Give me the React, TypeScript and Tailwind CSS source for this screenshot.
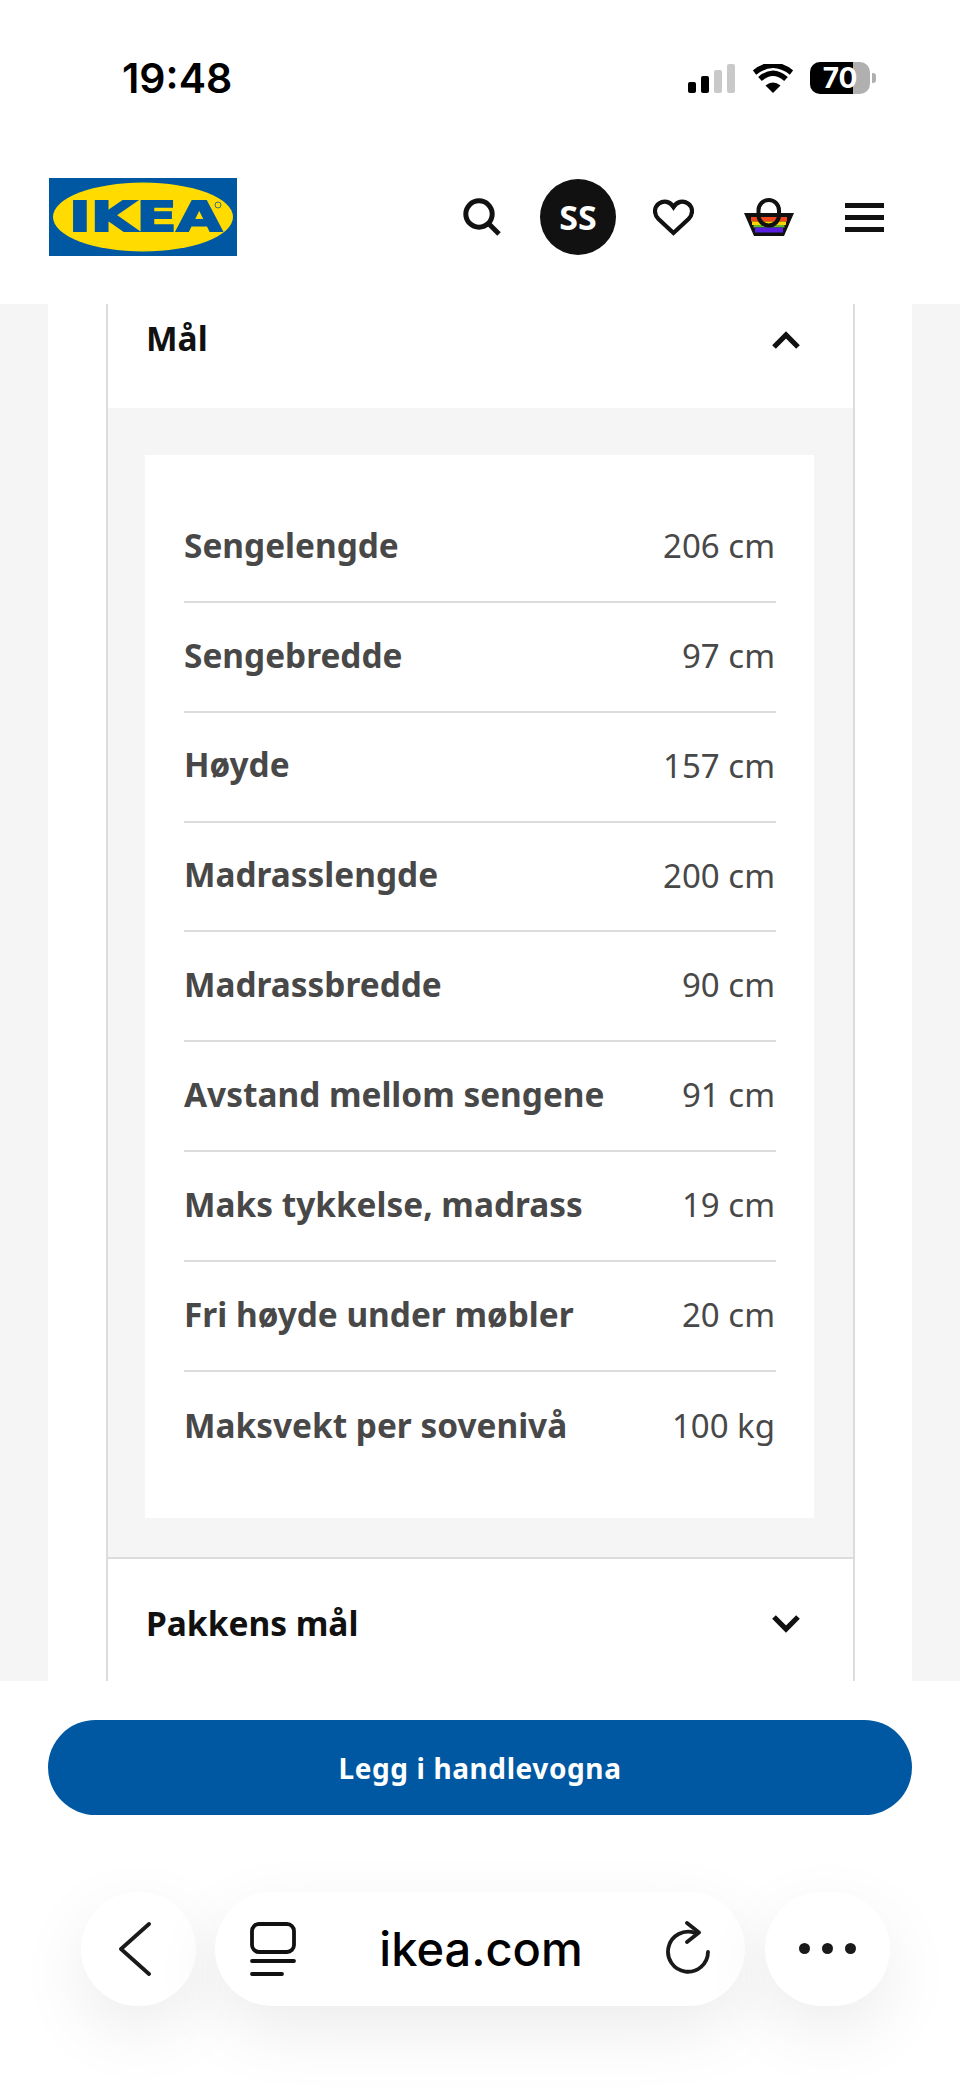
import React from "react";

const noto = "font-['Noto_Sans',sans-serif]";

const rows: [string, string][] = [
  ["Sengelengde", "206 cm"],
  ["Sengebredde", "97 cm"],
  ["Høyde", "157 cm"],
  ["Madrasslengde", "200 cm"],
  ["Madrassbredde", "90 cm"],
  ["Avstand mellom sengene", "91 cm"],
  ["Maks tykkelse, madrass", "19 cm"],
  ["Fri høyde under møbler", "20 cm"],
  ["Maksvekt per sovenivå", "100 kg"],
];

function Cell() {
  return (
    <div className="flex items-end gap-[5px] h-[29px]">
      <div className="w-[8px] h-[11px] rounded-[2px] bg-black" />
      <div className="w-[8px] h-[17px] rounded-[2px] bg-black" />
      <div className="w-[8px] h-[23px] rounded-[2px] bg-[#c9c9c9]" />
      <div className="w-[8px] h-[29px] rounded-[2px] bg-[#c9c9c9]" />
    </div>
  );
}

function Wifi() {
  return (
    <svg width="40" height="29" viewBox="0 0 40 29">
      <path d="M20 29 L12.5 21.5 Q20 15.5 27.5 21.5 Z" fill="#000" />
      <path d="M7 15 Q20 3.5 33 15" stroke="#000" strokeWidth="5.5" fill="none" />
      <path d="M1.5 8.5 Q20 -6 38.5 8.5" stroke="#000" strokeWidth="5.5" fill="none" />
    </svg>
  );
}

function Battery() {
  return (
    <div className="flex items-center gap-[2px]">
      <div className="relative w-[60px] h-[32px] rounded-[10px] overflow-hidden bg-[#b0b0b0] flex items-center justify-center">
        <div className="absolute left-0 top-0 bottom-0 w-[43px] bg-black" />
        <span className="relative text-white text-[28px] leading-none font-bold font-['Inter',sans-serif]">70</span>
      </div>
      <div className="w-[4px] h-[10px] rounded-r-[3px] bg-[#b0b0b0]" />
    </div>
  );
}

function Logo() {
  return (
    <svg width="188" height="78" viewBox="0 0 188 78" className="shrink-0">
      <rect width="188" height="78" fill="#0058a3" />
      <ellipse cx="94" cy="39" rx="90" ry="34.5" fill="#ffdb00" />
      <text
        x="20"
        y="53"
        fontFamily="'DejaVu Sans', sans-serif"
        fontWeight="700"
        fontSize="40"
        textLength="153"
        lengthAdjust="spacingAndGlyphs"
        fill="#0058a3"
        stroke="#0058a3"
        strokeWidth="1.8"
      >
        IKEA
      </text>
      <circle cx="169" cy="27" r="3" fill="none" stroke="#0058a3" strokeWidth="0.8" />
    </svg>
  );
}

function Search() {
  return (
    <svg width="38" height="38" viewBox="0 0 38 38" className="shrink-0">
      <circle cx="16" cy="16" r="13.2" fill="none" stroke="#111" strokeWidth="5" />
      <path d="M25.5 25.5 L36 36" stroke="#111" strokeWidth="5" fill="none" />
    </svg>
  );
}

function Heart() {
  return (
    <svg width="41" height="37" viewBox="0 0 41 37" className="shrink-0">
      <path
        d="M20.5 34 L5.5 20 C0.5 15 1 8 6 4.5 C11 1 17 2.5 20.5 8 C24 2.5 30 1 35 4.5 C40 8 40.5 15 35.5 20 Z"
        fill="none"
        stroke="#111"
        strokeWidth="4.2"
      />
    </svg>
  );
}

function Basket() {
  return (
    <svg width="50" height="38" viewBox="0 0 50 38" className="shrink-0">
      <path d="M0 15 H50 L40 38 H10 Z" fill="#111" />
      <rect x="7" y="19" width="36" height="4.5" fill="#f0451f" />
      <rect x="8" y="23.5" width="34" height="3.5" fill="#ffd400" />
      <rect x="9.5" y="27" width="31" height="2.5" fill="#5fb82e" />
      <rect x="11" y="29.5" width="28" height="5" fill="#5a1ee0" />
      <rect x="14.5" y="2" width="20.5" height="25.5" rx="10.2" fill="none" stroke="#111" strokeWidth="4" />
    </svg>
  );
}

function Burger() {
  return (
    <div className="flex flex-col gap-[7px] w-[39px] shrink-0">
      <div className="h-[5px] bg-[#111]" />
      <div className="h-[5px] bg-[#111]" />
      <div className="h-[5px] bg-[#111]" />
    </div>
  );
}

function Chevron({ up }: { up?: boolean }) {
  return (
    <svg width="28" height="18" viewBox="0 0 28 18" className="shrink-0">
      <path
        d={up ? "M2 16 L14 4 L26 16" : "M2 2 L14 14 L26 2"}
        fill="none"
        stroke="#111"
        strokeWidth="5.2"
      />
    </svg>
  );
}

const floatShadow = "shadow-[0_24px_70px_rgba(0,0,0,0.08)]";

export default function App() {
  return (
    <div className={`w-[960px] h-[2087px] bg-white flex flex-col overflow-hidden ${noto}`}>
      <header className="h-[304px] shrink-0 bg-white flex flex-col">
        <div className="h-[156px] flex items-center justify-between pl-[122px] pr-[84px]">
          <span className="text-[41px] leading-none font-semibold text-black font-['Inter',sans-serif]">19:48</span>
          <div className="flex items-center">
            <Cell />
            <div className="ml-[18px]"><Wifi /></div>
            <div className="ml-[17px]"><Battery /></div>
          </div>
        </div>
        <div className="h-[122px] flex items-center pl-[49px]">
          <Logo />
          <div className="ml-[226px]"><Search /></div>
          <div className="ml-[39px] w-[76px] h-[76px] rounded-full bg-[#111] flex items-center justify-center shrink-0">
            <span className="text-white text-[34px] leading-none font-bold">SS</span>
          </div>
          <div className="ml-[37px]"><Heart /></div>
          <div className="ml-[50px]"><Basket /></div>
          <div className="ml-[51px]"><Burger /></div>
        </div>
      </header>

      <main className="h-[1377px] shrink-0 bg-[#f5f5f5] px-[48px] overflow-hidden">
        <div className="h-full bg-white pl-[58px] pr-[57px]">
          <div className="h-full border-x-2 border-[#dcdcdc] flex flex-col">
            <div className="h-[104px] shrink-0 flex items-center justify-between pl-[38px] pr-[53px] pb-[34px]">
              <span className="text-[33.5px] leading-none font-bold text-[#111]">Mål</span>
              <div className="translate-y-[1px]"><Chevron up /></div>
            </div>
            <div className="h-[1151px] shrink-0 bg-[#f5f5f5] pl-[37px] pr-[39px] pt-[47px] pb-[39px] border-b-2 border-[#dcdcdc]">
              <div className="h-full bg-white pl-[39px] pr-[38px] pt-[38px]">
                {rows.map(([label, value], i) => (
                  <div
                    key={label}
                    className={`h-[109.86px] flex items-center justify-between text-[#484848] pb-[3px] ${
                      i < rows.length - 1 ? "border-b-2 border-[#dcdcdc]" : ""
                    }`}
                  >
                    <span className="text-[33.4px] font-bold leading-none">{label}</span>
                    <span className="text-[33px] font-normal leading-none pr-[1px]">{value}</span>
                  </div>
                ))}
              </div>
            </div>
            <div className="flex-1 flex items-center justify-between pl-[38px] pr-[53px] pt-[8px]">
              <span className="text-[33.5px] leading-none font-bold text-[#111]">Pakkens mål</span>
              <Chevron />
            </div>
          </div>
        </div>
      </main>

      <section className="flex-1 bg-white px-[48px] pt-[39px]">
        <button className="w-[864px] h-[95px] rounded-full bg-[#0058a3] text-white text-[28px] font-bold tracking-[0.6px] flex items-center justify-center">
          Legg i handlevogna
        </button>
        <div className="mt-[77px] ml-[33px] flex items-stretch h-[114px] text-[#1a1a1a]">
          <div className={`w-[115px] rounded-full bg-white ${floatShadow} flex items-center justify-center pr-[8px]`}>
            <svg width="32" height="54" viewBox="0 0 32 54">
              <path d="M30 2 L2 27 L30 52" fill="none" stroke="#1a1a1a" strokeWidth="3.8" strokeLinecap="round" strokeLinejoin="round" />
            </svg>
          </div>
          <div className={`ml-[19px] w-[530px] rounded-full bg-white ${floatShadow} flex items-center justify-between pl-[35px] pr-[35px]`}>
            <svg width="46" height="54" viewBox="0 0 46 54" className="shrink-0">
              <rect x="2" y="2" width="42" height="28" rx="7" fill="none" stroke="#111" strokeWidth="3.8" />
              <path d="M2 39 H44 M2 52 H32" stroke="#111" strokeWidth="3.8" strokeLinecap="round" fill="none" />
            </svg>
            <span className="text-[47px] leading-none text-black font-medium font-['Inter',sans-serif] pb-[2px]">ikea.com</span>
            <svg width="44" height="56" viewBox="0 0 44 56" className="shrink-0">
              <path d="M29 12 A20 20 0 1 0 42 31" fill="none" stroke="#1a1a1a" strokeWidth="3.8" strokeLinecap="round" />
              <path d="M21 2 L33 11.5 L21 21" fill="none" stroke="#1a1a1a" strokeWidth="3.8" strokeLinecap="round" strokeLinejoin="round" />
            </svg>
          </div>
          <div className={`ml-[20px] w-[125px] rounded-full bg-white ${floatShadow} flex items-center justify-center gap-[12px] pb-[2px]`}>
            <div className="w-[11px] h-[11px] rounded-full bg-[#1a1a1a]" />
            <div className="w-[11px] h-[11px] rounded-full bg-[#1a1a1a]" />
            <div className="w-[11px] h-[11px] rounded-full bg-[#1a1a1a]" />
          </div>
        </div>
      </section>
    </div>
  );
}
